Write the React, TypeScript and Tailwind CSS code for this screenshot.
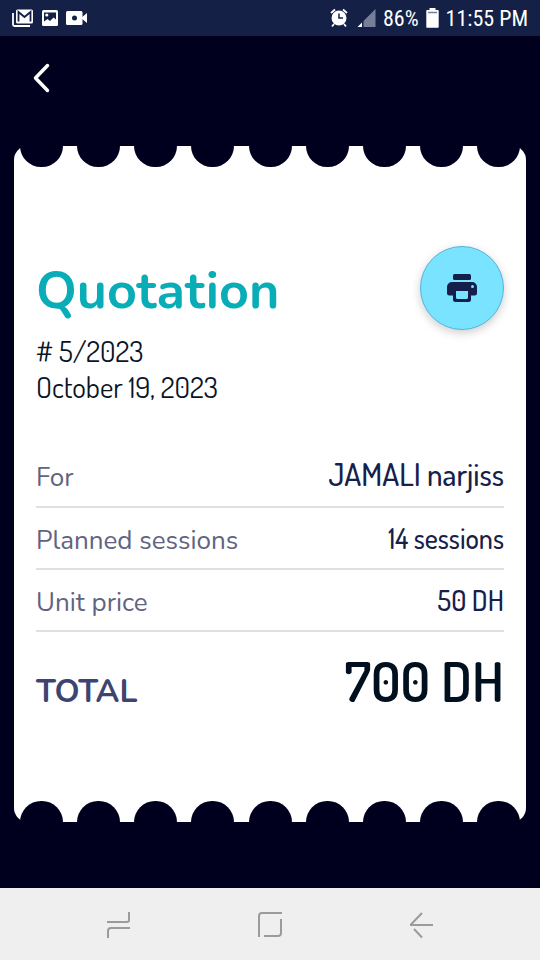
import type { ReactNode } from "react";

const notches = Array.from({ length: 9 }, (_, i) => i);

function Scallops({ edge }: { edge: "top" | "bottom" }) {
  return (
    <div className="flex justify-between px-[6px]" aria-hidden="true">
      {notches.map((n) => (
        <span
          key={n}
          className={
            edge === "top"
              ? "h-[21px] w-[43px] rounded-b-full bg-[#00001e]"
              : "h-[21px] w-[43px] rounded-t-full bg-[#00001e]"
          }
        />
      ))}
    </div>
  );
}

function StatusBar() {
  return (
    <div className="flex h-9 items-center justify-between bg-[#142045] px-3 text-white">
      <div className="flex items-center gap-2">
        <svg width="22" height="18" viewBox="0 0 22 18" fill="none" aria-label="Mail">
          <path d="M1 4v11.5a1.5 1.5 0 0 0 1.5 1.5H18" stroke="white" strokeWidth="1.8" />
          <rect x="4" y="0.500" width="17" height="14" rx="1.500" fill="white" />
          <path d="M6.500 12.500V3l6 5 6-5v9.500" stroke="#142045" strokeWidth="1.800" />
        </svg>
        <svg width="16" height="16" viewBox="0 0 16 16" aria-label="Picture">
          <rect width="16" height="16" rx="1.500" fill="white" />
          <path d="M2 2.500h12v7l-2.500-2L8 11 5.500 9 2 11.500z" fill="#142045" />
          <circle cx="4.800" cy="5" r="1.600" fill="white" />
        </svg>
        <svg width="22" height="16" viewBox="0 0 22 16" aria-label="Video">
          <rect y="1" width="16.500" height="14" rx="1.500" fill="white" />
          <path d="M15 8l6-5v10z" fill="white" />
          <circle cx="8.500" cy="8" r="2.500" fill="#142045" />
        </svg>
      </div>
      <div className="flex items-center gap-[7px] font-['Roboto_Condensed','Roboto','Liberation_Sans_Narrow',sans-serif] text-[22px] leading-6">
        <svg className="mr-[2px]" width="18" height="20" viewBox="0 0 18 20" fill="none" aria-label="Alarm">
          <circle cx="9" cy="10" r="7.500" fill="white" />
          <path d="M1 5l4-3.500M17 5l-4-3.500M4 16l-2 2.500M14 16l2 2.500" stroke="white" strokeWidth="1.800" />
          <path d="M9 5.500V10h4" stroke="#142045" strokeWidth="1.500" />
        </svg>
        <svg width="19" height="18" viewBox="0 0 19 18" aria-label="Signal">
          <path d="M5 18V13.500L.5 18z" fill="white" />
          <path d="M6.500 18V12L18.500 0v18z" fill="#777f98" />
        </svg>
        <span className="pt-[2px]">86%</span>
        <svg width="13" height="20" viewBox="0 0 13 20" aria-label="Battery">
          <path d="M3.500 0h6v2H12a.7.7 0 0 1 .7.700V19a.7.7 0 0 1-.7.700H1a.7.7 0 0 1-.7-.700V2.700A.7.7 0 0 1 1 2h2.500z" fill="white" />
          <path d="M2 4.500h9" stroke="#777f98" strokeWidth="1.500" />
        </svg>
        <span className="pt-[2px]">11:55 PM</span>
      </div>
    </div>
  );
}

function Row({ label, children }: { label: string; children: ReactNode }) {
  return (
    <div className="flex h-[62px] items-baseline justify-between border-b-2 border-[#e0e0e0] pt-[10px]">
      <dt className="font-['Nunito','Lato',sans-serif] text-[26px] leading-9 text-[#5f6480]">{label}</dt>
      <dd className="text-[#16204a]">{children}</dd>
    </div>
  );
}

export default function App() {
  return (
    <div className="flex min-h-screen flex-col bg-[#00001e] font-['Dosis','Liberation_Sans_Narrow','Lato',sans-serif]">
      <StatusBar />
      <header className="flex h-[84px] items-center px-6">
        <button type="button" aria-label="Back" className="flex size-9 items-center justify-center">
          <svg width="20" height="30" viewBox="0 0 20 30" fill="none">
            <path d="M15.500 2.500L3.500 15l12 12.500" stroke="white" strokeWidth="3.500" strokeLinecap="round" strokeLinejoin="round" />
          </svg>
        </button>
      </header>

      <main className="flex flex-1 flex-col px-[14px] pt-[26px] pb-[66px]">
        <article className="flex flex-1 flex-col rounded-[14px] bg-white">
          <Scallops edge="top" />
          <div className="flex-1 px-[22px] pt-[79px]">
            <div className="flex items-start justify-between">
              <div>
                <h1 className="pt-[3px] font-['Nunito','Lato',sans-serif] text-[52px] leading-[84px] font-bold text-[#08adb8]">Quotation</h1>
                <p className="text-[29px] leading-9 text-[#0b1426]"># 5/2023</p>
                <p className="text-[29px] leading-9 text-[#0b1426]">October 19, 2023</p>
              </div>
              <button
                type="button"
                aria-label="Print"
                className="flex size-[84px] shrink-0 items-center justify-center rounded-full border border-[#55b4dc] bg-[#7ae3ff] shadow-[0_3px_10px_rgba(0,0,0,0.2)]"
              >
                <svg width="30" height="28" viewBox="0 0 30 28">
                  <rect x="6" y="0" width="18" height="6" rx="1.500" fill="#14204a" />
                  <path d="M5 8h20a5 5 0 0 1 5 5v6a2.500 2.500 0 0 1-2.500 2.500h-25A2.500 2.500 0 0 1 0 19v-6a5 5 0 0 1 5-5z" fill="#14204a" />
                  <rect x="6" y="14" width="18" height="14" rx="2.500" fill="#14204a" />
                  <path d="M9 17h12v6.500a1.500 1.500 0 0 1-1.500 1.500h-9A1.500 1.500 0 0 1 9 23.500z" fill="#7ae3ff" />
                  <circle cx="25.500" cy="12.500" r="1.500" fill="#7ae3ff" />
                </svg>
              </button>
            </div>

            <dl className="mt-[41px]">
              <Row label="For">
                <span className="text-[31px] leading-9 font-medium">JAMALI narjiss</span>
              </Row>
              <Row label="Planned sessions">
                <span className="text-[28px] leading-10 font-medium">14 sessions</span>
              </Row>
              <Row label="Unit price">
                <span className="text-[28px] leading-10 font-medium">50 DH</span>
              </Row>
              <div className="flex items-baseline justify-between pt-[13px]">
                <dt className="font-['Nunito','Lato',sans-serif] text-[32px] leading-10 font-bold text-[#3d4470]">TOTAL</dt>
                <dd className="text-[54px] leading-[72px] font-semibold text-[#00101f]">700 DH</dd>
              </div>
            </dl>
          </div>
          <Scallops edge="bottom" />
        </article>
      </main>

      <nav className="flex h-[72px] items-center justify-between bg-[#efefef] px-[104px] pt-[2px]" aria-label="System">
        <button type="button" aria-label="Recent apps" className="p-[2px]">
          <svg width="24" height="28" viewBox="0 0 24 28" fill="none" stroke="#9b9b9b" strokeWidth="2">
            <path d="M23 1v8a2 2 0 0 1-2 2H1M24 17H5a3 3 0 0 0-3 3v7" />
          </svg>
        </button>
        <button type="button" aria-label="Home">
          <svg width="26" height="26" viewBox="0 0 26 26" fill="none" stroke="#9b9b9b" strokeWidth="2">
            <path d="M2 25V4a3 3 0 0 1 3-3h20M24 7v14a3 3 0 0 1-3 3H7" />
          </svg>
        </button>
        <button type="button" aria-label="System back" className="p-[2px]">
          <svg width="24" height="28" viewBox="0 0 24 28" fill="none" stroke="#9b9b9b" strokeWidth="2">
            <path d="M12 2L1 13.500v.5h22M4 18l8 8.500" />
          </svg>
        </button>
      </nav>
    </div>
  );
}
